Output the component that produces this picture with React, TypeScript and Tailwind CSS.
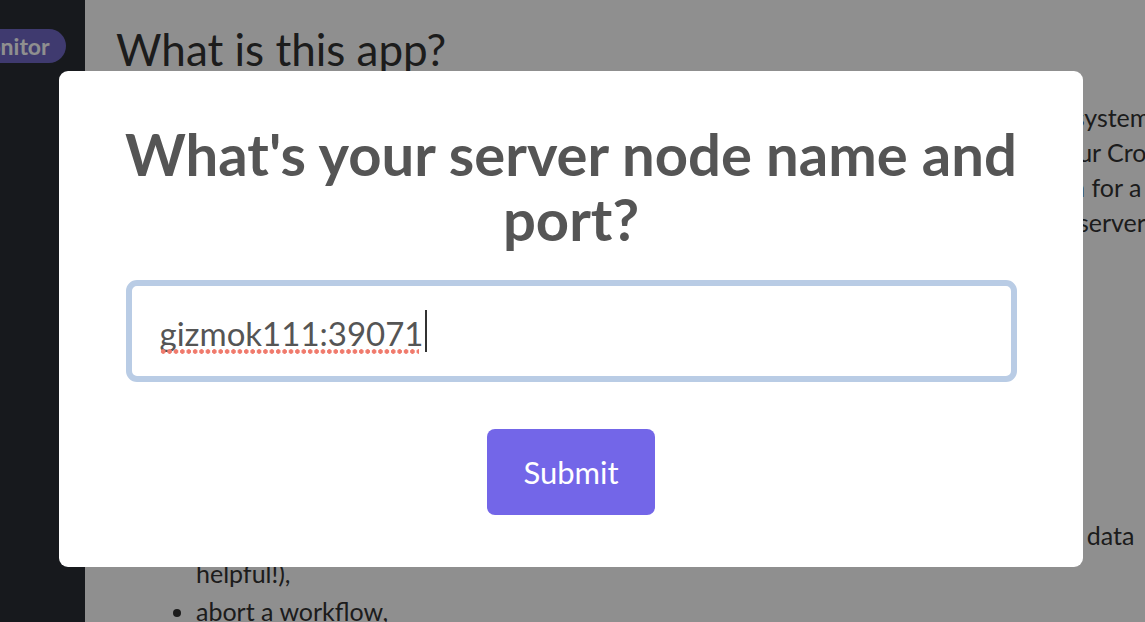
export default function App() {
  return (
    <div
      className="relative flex h-[622px] w-[1145px] overflow-hidden bg-white"
      style={{ fontFamily: "Lato, 'Open Sans', sans-serif" }}
    >
      {/* sidebar */}
      <aside className="w-[85px] shrink-0 bg-[#292e35] pt-[29px]">
        <div className="ml-[-48px] inline-flex h-[34px] items-center rounded-full bg-[#7068c6] pl-[14px] pr-[16px] text-[23px] font-bold text-white">
          Monitor
        </div>
      </aside>

      {/* page content */}
      <main className="flex-1 overflow-hidden pl-[31px] pt-[22px] text-[#333]">
        <h1 className="text-[44px] leading-[54px]">What is this app?</h1>
        <div className="mt-[24px] whitespace-nowrap text-[25px] leading-[35px]">
          <p>This app is a tiny dashboard for all the jobs run by the Cromwell workflow management system, made</p>
          <p>from the Broad Institute. It lets you view and manage the workflows you have sent to your Cromwell server</p>
          <p>without typing any REST API calls by hand. This app is very light, and it is designed to run for a long time</p>
          <p>session. To begin, it asks you for the exact node name and port of the running Cromwell server</p>
        </div>
        <ul className="mt-[276px] list-disc whitespace-nowrap pl-[80px] text-[25px] leading-[38px]">
          <li>see all of the metadata of a single workflow, including all the call level output and data</li>
          <li className="list-none">helpful!),</li>
          <li>abort a workflow,</li>
        </ul>
      </main>

      {/* overlay + modal */}
      <div className="absolute inset-0 bg-black/[0.44] pl-[59px] pt-[71px]">
        <div className="flex h-[496px] w-[1024px] flex-col items-center rounded-[9px] bg-white px-[50px] pt-[50px]">
          <h2 className="text-center text-[58px] font-bold leading-[65px] text-[#555]">
            What's your server node name and port?
          </h2>
          <div className="mt-[29px] flex h-[102px] w-[891px] shrink-0 items-center rounded-[11px] border-[6px] border-[#b9cce5] bg-white pl-[28px]">
            <span className="relative mt-[4px] text-[33px] leading-[40px] text-[#555]">
              gizmok111:39071
              <span className="absolute left-0 right-[4px] top-[36px] h-[5px] bg-[radial-gradient(circle,#f07a6c_2px,transparent_2.6px)] bg-[length:6.4px_5px] bg-repeat-x" />
            </span>
            <span className="ml-[2px] h-[42px] w-[2px] bg-[#333]" />
          </div>
          <button className="mt-[47px] h-[86px] w-[168px] shrink-0 rounded-[8px] bg-[#7366e8] text-[31px] text-white">
            Submit
          </button>
        </div>
      </div>
    </div>
  );
}
